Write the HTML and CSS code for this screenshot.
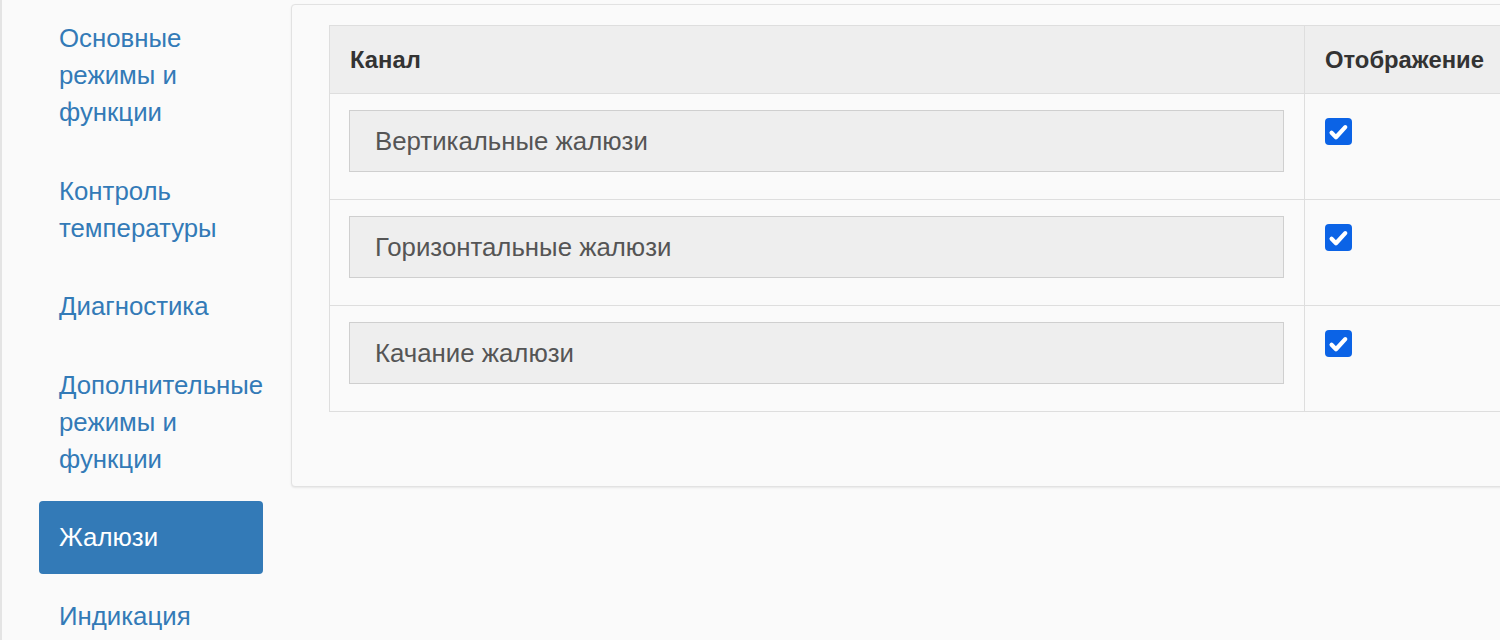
FILE: index.html
```html
<!DOCTYPE html>
<html lang="ru">
<head>
<meta charset="utf-8">
<title>Жалюзи</title>
<link rel="stylesheet" href="styles.css">
</head>
<body>
<div class="page">
  <nav class="sidebar">
    <ul class="nav">
      <li><a href="#">Основные режимы и функции</a></li>
      <li><a href="#">Контроль температуры</a></li>
      <li><a href="#">Диагностика</a></li>
      <li><a href="#">Дополнительные режимы и функции</a></li>
      <li class="active"><a href="#">Жалюзи</a></li>
      <li><a href="#">Индикация</a></li>
    </ul>
  </nav>
  <main class="panel">
    <table class="channels">
      <thead>
        <tr>
          <th class="col-name">Канал</th>
          <th class="col-show">Отображение</th>
        </tr>
      </thead>
      <tbody>
        <tr>
          <td class="col-name"><input class="field" type="text" value="Вертикальные жалюзи" readonly></td>
          <td class="col-show"><span class="check"><svg viewBox="0 0 16 16" width="27" height="27"><path d="M3.9 8.8 L6.5 11.4 L12 5.4" fill="none" stroke="#fff" stroke-width="2.5" stroke-linecap="round" stroke-linejoin="round"/></svg></span></td>
        </tr>
        <tr>
          <td class="col-name"><input class="field" type="text" value="Горизонтальные жалюзи" readonly></td>
          <td class="col-show"><span class="check"><svg viewBox="0 0 16 16" width="27" height="27"><path d="M3.9 8.8 L6.5 11.4 L12 5.4" fill="none" stroke="#fff" stroke-width="2.5" stroke-linecap="round" stroke-linejoin="round"/></svg></span></td>
        </tr>
        <tr>
          <td class="col-name"><input class="field" type="text" value="Качание жалюзи" readonly></td>
          <td class="col-show"><span class="check"><svg viewBox="0 0 16 16" width="27" height="27"><path d="M3.9 8.8 L6.5 11.4 L12 5.4" fill="none" stroke="#fff" stroke-width="2.5" stroke-linecap="round" stroke-linejoin="round"/></svg></span></td>
        </tr>
      </tbody>
    </table>
  </main>
</div>
</body>
</html>
```

FILE: styles.css
```css
html, body {
  margin: 0;
  padding: 0;
  background: #fafafa;
  font-family: "Liberation Sans", Arial, sans-serif;
  overflow: hidden;
}

.page {
  display: flex;
  align-items: flex-start;
  gap: 28px;
  height: 640px;
  border-left: 2px solid #e4e4e4;
  padding-left: 37px;
}

.sidebar {
  flex: none;
  width: 224px;
}

.nav {
  list-style: none;
  margin: 2px 0 0;
  padding: 0;
  display: flex;
  flex-direction: column;
  gap: 5.5px;
}

.nav a {
  display: block;
  padding: 18px 12px 18px 20px;
  font-size: 25.8px;
  line-height: 37px;
  color: #337ab7;
  text-decoration: none;
  border-radius: 4px;
}

.nav .active a {
  background: #337ab7;
  color: #fff;
}

.panel {
  flex: none;
  width: 1400px;
  margin-top: 4px;
  padding: 20px 37px 74px;
  background: #fafafa;
  border: 1px solid #e2e2e2;
  border-radius: 4px;
  box-shadow: 0 1px 2px rgba(0, 0, 0, 0.08);
}

.channels {
  border-collapse: separate;
  border-spacing: 0;
  border-top: 1px solid #dedede;
  border-left: 1px solid #dedede;
  width: 100%;
}

.channels th,
.channels td {
  border-right: 1px solid #dedede;
  border-bottom: 1px solid #dedede;
  text-align: left;
}

.channels th {
  height: 67px;
  padding: 0 20px;
  background: #eeeeee;
  color: #333;
  font-size: 23.8px;
  font-weight: bold;
  vertical-align: middle;
}

.channels td {
  vertical-align: top;
  padding: 16px 20px 16px 19px;
  height: 73px;
}

.channels .col-name {
  width: 934px;
}

.channels th.col-name {
  width: 935px;
  padding-left: 20px;
  padding-right: 19px;
}

.channels td.col-show {
  padding-left: 20px;
}

.field {
  display: block;
  box-sizing: border-box;
  width: 100%;
  height: 62px;
  margin: 0;
  padding: 0 25px;
  background: #eeeeee;
  border: 1px solid #cfcfcf;
  border-radius: 0;
  color: #555;
  font-family: "Liberation Sans", Arial, sans-serif;
  font-size: 25.8px;
  outline: none;
}

.check {
  display: block;
  width: 27px;
  height: 27px;
  margin-top: 8px;
  background: #0b63e6;
  border-radius: 4px;
}

.check svg {
  display: block;
}
```
